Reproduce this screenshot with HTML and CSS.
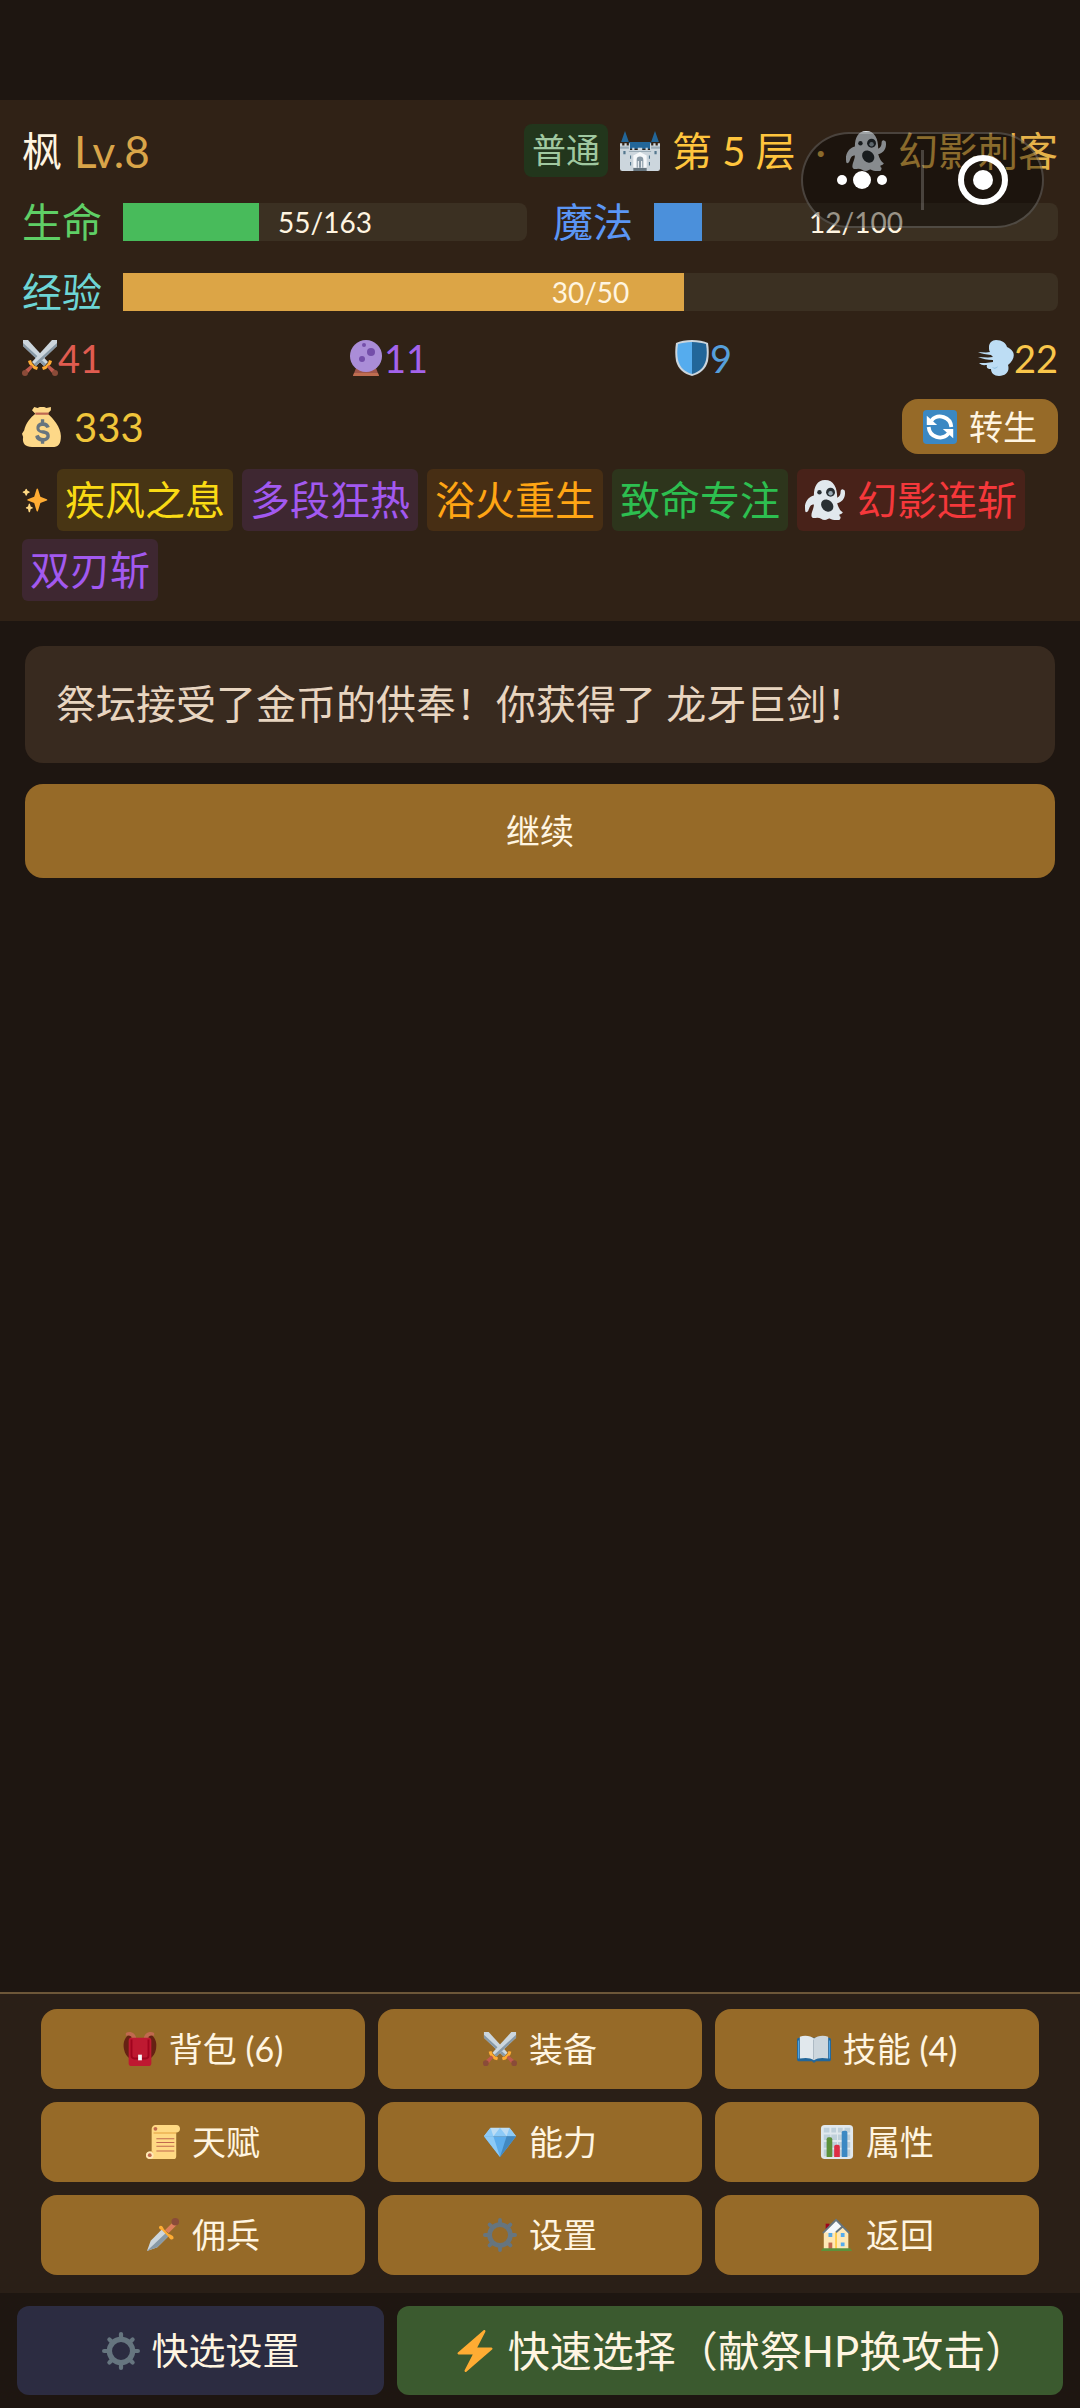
FILE: index.html
```html
<!DOCTYPE html>
<html lang="zh-CN">
<head>
  <meta charset="UTF-8" />
  <meta name="viewport" content="width=device-width, initial-scale=1.0" />
  <title>地牢冒险</title>
  <link rel="stylesheet" href="styles.css">
</head>
<body>
  <!-- icons -->
  <svg class="icon-defs" aria-hidden="true">
    <symbol id="i-castle" viewBox="0 0 36 36">
      <path fill="#269" d="M4.500 0L8 10H1zM31.500 0L35 10h-7zM8 10h20v6H8z"/>
      <path fill="#CCD6DD" d="M0 11h2v2h2v-2h2v2h2v-2h1v6h2v-2h2v2h3v-2h4v2h3v-2h2v2h2v-6h1v2h2v-2h2v2h2v-2h2v23a2 2 0 0 1-2 2H2a2 2 0 0 1-2-2z"/>
      <path fill="#99AAB5" d="M0 14h8v2H0zM28 14h8v2h-8zM8 18h20v1H8z"/>
      <path fill="#66757F" d="M12 33h12v3H12z"/>
      <path fill="#F5F8FA" d="M12 22l6-3 6 3v11H12z"/>
      <path fill="#8899A6" d="M15 33v-7a3 3 0 0 1 6 0v7h-1v-6h-1v6h-2v-6h-1v6z"/>
      <path fill="#55788F" d="M3 18h2v3H3zM31 18h2v3h-2zM9 22h1v3H9zM26 22h1v3h-1zM9 28h1v3H9zM26 28h1v3h-1z"/>
    </symbol>
    <symbol id="i-ghost" viewBox="0 0 36 36">
      <path fill="#E1E8ED" d="M35 9c-1-1-3-1-3 2 0 2-1 4-3 5C29 7 26 0 18 0 11 0 8 6 8 14c-4 1-7 4-8 9 0 3 0 6 1 6 2 0 2-2 3-4 1-3 3-3 4-3 0 4-3 8-2 11 1 2 3 1 5 1 3 0 4 2 7 2 2 0 3-2 5-1 3 1 4 1 7 1 2 0 2-2 2-3-1 0-1-1-1-2 1 0 3-1 3-2-2-1-4-4-5-8 4-1 7-4 7-9 0-1 0-3-1-3z"/>
      <ellipse fill="#292F33" cx="13" cy="11" rx="2" ry="2"/>
      <circle fill="#292F33" cx="23" cy="11" r="4"/>
      <circle fill="#99AAB5" cx="23" cy="12" r="2"/>
      <ellipse fill="#292F33" cx="20" cy="23" rx="5" ry="6" transform="rotate(-45 20 23)"/>
    </symbol>
    <symbol id="i-swords" viewBox="0 0 36 36">
      <g id="blade">
        <path fill="#CCD6DD" d="M1 0h5l20 22-4 4L1 6z"/>
        <path fill="#8899A6" d="M1 6V3l23 21-2 2z"/>
        <path fill="#FFAC33" d="M27 20l3 1-1 3-5 5-3 1-1-3 3-1 3-3z"/>
        <path fill="#BE5A4E" d="M27 25l6 5-3 3-5-6z"/>
        <circle fill="#8A4B38" cx="33" cy="33" r="3"/>
      </g>
      <use href="#blade" transform="matrix(-1 0 0 1 36 0)"/>
    </symbol>
    <symbol id="i-orb" viewBox="0 0 36 36">
      <path fill="#A0564A" d="M8 28h20l3 8H5z"/>
      <path fill="#BE6D50" d="M6 33h24l1 3H5z"/>
      <circle fill="#AA8DD8" cx="18" cy="16" r="16"/>
      <circle fill="#744EAA" cx="16" cy="5" r="2"/>
      <circle fill="#744EAA" cx="23" cy="12" r="4"/>
      <circle fill="#744EAA" cx="14" cy="19" r="3"/>
    </symbol>
    <symbol id="i-shield" viewBox="0 0 36 36">
      <path fill="#CCD6DD" d="M18 0C12 0 6 1 2 3c-1 6-1 12 0 18 2 8 8 13 16 15 8-2 14-7 16-15 1-6 1-12 0-18-4-2-10-3-16-3z"/>
      <path fill="#55ACEE" d="M18 2C12 2 8 3 4 4c-1 6-1 11 0 16 2 8 7 12 14 14z"/>
      <path fill="#226699" d="M18 2c6 0 10 1 14 2 1 6 1 11 0 16-2 8-7 12-14 14z"/>
    </symbol>
    <symbol id="i-dash" viewBox="0 0 36 36">
      <path fill="#BDDDF4" d="M18 0c-4 0-7 3-7 7 0 2 0 4 1 5-4 1-8 0-12 0 4 2 8 2 13 3l2 2c-5 1-10 0-15 0 5 2 9 3 15 3v2c-5 1-10 1-14 1 3 3 6 2 8 2-1 3 1 4 4 4 0 4 3 7 8 7 7 0 11-5 9-11 5-4 7-9 5-13-2-3-4-4-6-5-1-4-5-7-11-7z"/>
      <path fill="#8FBFE0" d="M14 27c2 1 4 1 6-1-1 3-4 4-6 1z"/>
    </symbol>
    <symbol id="i-bag" viewBox="0 0 36 36">
      <path fill="#FDD888" d="M11 0l3 1 2-1h4l2 1 4-1v3l-3 3c5 4 12 12 12 20 0 7-2 10-8 10H9c-6 0-9-3-8-9l-1-3 2-3c1-6 6-12 10-15l-3-3z"/>
      <path fill="#BF6952" d="M12 5h12v2H12z"/>
      <path fill="#67757F" d="M17 11h3v3c3 0 4 2 5 4l-3 1c-1-2-2-2-4-2-3 0-3 4 0 4 5 0 7 2 7 5s-2 4-5 5v2h-3v-2c-3-1-5-2-5-5l3-1c1 2 2 3 4 3 4 0 4-4 0-4-4-1-6-2-6-5s2-5 4-5z"/>
    </symbol>
    <symbol id="i-cycle" viewBox="0 0 36 36">
      <rect fill="#3B88C3" width="36" height="36" rx="4"/>
      <path fill="none" stroke="#FFF" stroke-width="4" d="M9 11a12 12 0 0 1 21 7M27 25a12 12 0 0 1-21-7"/>
      <path fill="#FFF" d="M4 6v10h11zM32 30V20H21z"/>
    </symbol>
    <symbol id="i-spark" viewBox="0 0 36 36">
      <path fill="#FFAC33" d="M34.347 16.893l-8.899-3.294-3.323-10.891c-.128-.42-.517-.708-.956-.708-.439 0-.828.288-.956.708l-3.322 10.891-8.900 3.294c-.393.146-.653.519-.653.938 0 .418.260.793.653.938l8.895 3.293 3.324 11.223c.126.424.516.715.959.715.442 0 .833-.291.959-.716l3.324-11.223 8.896-3.293c.391-.144.652-.518.652-.937 0-.418-.261-.792-.653-.938z"/>
      <path fill="#FFD983" d="M14.347 27.894l-2.314-.856-.900-3.300c-.118-.436-.513-.738-.964-.738-.451 0-.846.302-.965.737l-.900 3.300-2.313.856c-.393.146-.653.520-.653.938 0 .418.260.793.653.938l2.301.853.907 3.622c.112.444.511.756.970.756.459 0 .858-.312.970-.757l.907-3.622 2.301-.853c.393-.144.653-.519.653-.937 0-.418-.260-.793-.653-.937zM10.009 6.231l-2.364-.875-.876-2.365c-.145-.393-.519-.653-.938-.653-.418 0-.792.260-.938.653l-.875 2.365-2.365.875c-.393.146-.653.520-.653.938 0 .418.260.793.653.938l2.365.875.875 2.365c.146.393.520.653.938.653.418 0 .792-.260.938-.653l.875-2.365 2.365-.875c.393-.146.653-.520.653-.938 0-.418-.260-.792-.654-.938z"/>
    </symbol>
    <symbol id="i-pack" viewBox="0 0 36 36">
      <path fill="#662113" d="M6 3C1 7 0 12 1 18c1 5 3 8 6 10V8l4-5zM30 3c5 4 6 9 5 15-1 5-3 8-6 10V8l-4-5z"/>
      <path fill="#C1694F" d="M3 1c4-2 9-1 11 5l-3 2C9 4 7 3 3 4zM33 1c-4-2-9-1-11 5l3 2c2-4 4-5 8-4z"/>
      <path fill="#BE1931" d="M9 6h18c3 0 3 2 3 4v23c0 2-1 3-4 3H10c-3 0-4-1-4-3V10c0-2 0-4 3-4z"/>
      <path fill="none" stroke="#A0041E" stroke-width="2" d="M9 8v17c0 2 1 3 3 3h12c2 0 3-1 3-3V8"/>
      <path fill="#F5F8FA" d="M16 24h4v6h-4z"/>
    </symbol>
    <symbol id="i-book" viewBox="0 0 36 36">
      <path fill="#226699" d="M2 6h32c1 0 2 1 2 2v21c0 1-1 2-2 2H20c-1 2-3 2-4 0H2c-1 0-2-1-2-2V8c0-1 1-2 2-2z"/>
      <path fill="#55ACEE" d="M1 9h1v19H1zM34 9h1v19h-1z"/>
      <path fill="#CCD6DD" d="M18 7c3-3 10-4 15-2v23c-6-1-11-1-15 2z"/>
      <path fill="#E1E8ED" d="M18 7C15 4 8 3 3 5v23c6-1 11-1 15 2z"/>
      <path fill="#AAB8C2" d="M17 8h1v21h-1z"/>
    </symbol>
    <symbol id="i-scroll" viewBox="0 0 36 36">
      <path fill="#FFD983" d="M10 0h22c3 0 4 2 4 4s-1 4-4 4v25c0 2-1 3-3 3H4c-2 0-4-2-4-4s2-4 4-4h2V4c0-2 2-4 4-4z"/>
      <path fill="#E39F3D" d="M8 8h24v1H8zM6 28h1v5H6z"/>
      <circle fill="#FFE8B6" cx="4" cy="32" r="4"/>
      <circle fill="#C1694F" cx="10" cy="4" r="2"/>
      <circle fill="#C1694F" cx="4" cy="32" r="2"/>
      <path fill="#C1694F" d="M11 14h19v1H11zM11 18h19v1H11zM11 22h19v1H11zM11 27h19v1H11z"/>
    </symbol>
    <symbol id="i-gem" viewBox="0 0 36 36">
      <path fill="#BDDDF4" d="M8 3h20l7 9H1z"/>
      <path fill="#8CCAF7" d="M8 3l3 9H1zM28 3l-3 9h10zM11 12l7-9 7 9z"/>
      <path fill="#5DADEC" d="M1 12h34L18 34z"/>
      <path fill="#4289C1" d="M35 12H25l-7 22z"/>
      <path fill="#8CCAF7" d="M1 12h10l7 22z"/>
    </symbol>
    <symbol id="i-chart" viewBox="0 0 36 36">
      <rect fill="#E1E8ED" x="1" width="34" height="36" rx="4"/>
      <path fill="#BFD0DA" d="M4 3h6v5H4zM12 3h5v5h-5zM19 3h5v5h-5zM26 3h6v5h-6zM4 10h28v6H4zM4 18h28v6H4zM4 26h28v7H4z"/>
      <path fill="#E1E8ED" d="M11 9h1v25h-1zM18 9h1v25h-1zM25 9h1v25h-1z"/>
      <path fill="#5C913B" d="M7 15a2 2 0 0 1 2-2h2a2 2 0 0 1 2 2v19H7z"/>
      <path fill="#DD2E44" d="M15 23a2 2 0 0 1 2-2h2a2 2 0 0 1 2 2v11h-6z"/>
      <path fill="#3B88C3" d="M23 8a2 2 0 0 1 2-2h2a2 2 0 0 1 2 2v26h-6z"/>
    </symbol>
    <symbol id="i-dagger" viewBox="0 0 36 36">
      <path fill="#CCD6DD" d="M1 35l4-11 12-12 7 7-12 12z"/>
      <path fill="#8899A6" d="M1 35l20-19 3 3-12 12z"/>
      <path fill="#DD7F5B" d="M20 13l9-9 4 3-9 9z"/>
      <path fill="#FFAC33" d="M14 9c2-2 4 0 5 3l5 5c3 1 6 2 5 5-2 2-4 0-5-2l-7-7c-2-1-4-2-3-4z"/>
      <circle fill="#8A4B38" cx="31" cy="4" r="4"/>
    </symbol>
    <symbol id="i-gear" viewBox="0 0 36 36">
      <circle fill="none" stroke="#66757F" stroke-width="5" cx="18" cy="18" r="11"/>
      <path fill="none" stroke="#66757F" stroke-width="4" stroke-linecap="round" d="M18 2v5M18 29v5M2 18h5M29 18h5M7 7l3 3M26 26l3 3M7 29l3-3M26 10l3-3"/>
    </symbol>
    <symbol id="i-house" viewBox="0 0 36 36">
      <path fill="#A0041E" d="M6 6h4v7H6z"/>
      <path fill="#FFE8B6" d="M4 15L17 2l13 13v18H4z"/>
      <path fill="#FFCC4D" d="M16 15h2v18h-2z"/>
      <path fill="#F5F8FA" d="M5 15L17 3l6 5-8 8z"/>
      <path fill="none" stroke="#66757F" stroke-width="2" d="M3 16L17 2l14 14M17 15l7-6"/>
      <path fill="#55ACEE" d="M9 16h4v4H9zM22 16h4v4h-4zM22 26h4v4h-4z"/>
      <path fill="#C1694F" d="M9 26h4v7H9z"/>
      <path fill="#5C913B" d="M3 32h29l2 3H1z"/>
    </symbol>
    <symbol id="i-bolt" viewBox="0 0 36 36">
      <path fill="#FFAC33" d="M32.938 15.651C32.792 15.260 32.418 15 32 15H19.925L26.890 1.458c.219-.426.106-.947-.271-1.243C26.437.071 26.218 0 26 0c-.233 0-.466.082-.653.243L18 6.588 3.347 19.243c-.316.273-.430.714-.284 1.105S3.582 21 4 21h12.075L9.110 34.542c-.219.426-.106.947.271 1.243.182.144.401.215.619.215.233 0 .466-.082.653-.243L18 29.412l14.653-12.655c.317-.273.430-.714.285-1.106z"/>
    </symbol>
  </svg>

  <div class="mini-menu">
    <button type="button" aria-label="更多">
      <svg viewBox="0 0 60 60"><circle cx="10" cy="30" r="5"/><circle cx="30" cy="30" r="9"/><circle cx="50" cy="30" r="5"/></svg>
    </button>
    <span class="mini-line"></span>
    <button type="button" aria-label="关闭">
      <svg viewBox="0 0 60 60"><circle cx="30" cy="30" r="22" fill="none" stroke="#fff" stroke-width="6"/><circle cx="30" cy="30" r="10"/></svg>
    </button>
  </div>

  <header class="status">
    <div class="row top-row">
      <div class="hero"><span>枫</span><span class="level">Lv.8</span></div>
      <div class="floor">
        <span class="mode">普通</span>
        <svg class="icon"><use href="#i-castle"/></svg>
        <span>第 5 层</span>
        <span class="dot">·</span>
        <svg class="icon"><use href="#i-ghost"/></svg>
        <span class="job">幻影刺客</span>
      </div>
    </div>

    <div class="row bars">
      <div class="meter hp">
        <span class="meter-name">生命</span>
        <div class="track"><div class="fill" style="width:33.74%"></div><span class="value">55/163</span></div>
      </div>
      <div class="meter mp">
        <span class="meter-name">魔法</span>
        <div class="track"><div class="fill" style="width:12%"></div><span class="value">12/100</span></div>
      </div>
    </div>
    <div class="row bars">
      <div class="meter xp">
        <span class="meter-name">经验</span>
        <div class="track"><div class="fill" style="width:60%"></div><span class="value">30/50</span></div>
      </div>
    </div>

    <div class="row stats">
      <span class="stat atk"><svg class="icon"><use href="#i-swords"/></svg>41</span>
      <span class="stat mag"><svg class="icon"><use href="#i-orb"/></svg>11</span>
      <span class="stat def"><svg class="icon"><use href="#i-shield"/></svg>9</span>
      <span class="stat spd"><svg class="icon"><use href="#i-dash"/></svg>22</span>
    </div>

    <div class="row gold-row">
      <span class="gold"><svg class="icon"><use href="#i-bag"/></svg>333</span>
      <button type="button" class="btn rebirth"><svg class="icon"><use href="#i-cycle"/></svg>转生</button>
    </div>

    <div class="traits">
      <svg class="icon spark"><use href="#i-spark"/></svg>
      <span class="chip yellow">疾风之息</span>
      <span class="chip purple">多段狂热</span>
      <span class="chip orange">浴火重生</span>
      <span class="chip green">致命专注</span>
      <span class="chip red"><svg class="icon"><use href="#i-ghost"/></svg>幻影连斩</span>
      <span class="chip purple">双刃斩</span>
    </div>
  </header>

  <main class="scene">
    <p class="message">祭坛接受了金币的供奉！你获得了 龙牙巨剑！</p>
    <button type="button" class="btn next">继续</button>
  </main>

  <nav class="menu">
    <button type="button" class="btn"><svg class="icon"><use href="#i-pack"/></svg>背包 (6)</button>
    <button type="button" class="btn"><svg class="icon"><use href="#i-swords"/></svg>装备</button>
    <button type="button" class="btn"><svg class="icon"><use href="#i-book"/></svg>技能 (4)</button>
    <button type="button" class="btn"><svg class="icon"><use href="#i-scroll"/></svg>天赋</button>
    <button type="button" class="btn"><svg class="icon"><use href="#i-gem"/></svg>能力</button>
    <button type="button" class="btn"><svg class="icon"><use href="#i-chart"/></svg>属性</button>
    <button type="button" class="btn"><svg class="icon"><use href="#i-dagger"/></svg>佣兵</button>
    <button type="button" class="btn"><svg class="icon"><use href="#i-gear"/></svg>设置</button>
    <button type="button" class="btn"><svg class="icon"><use href="#i-house"/></svg>返回</button>
  </nav>

  <footer class="quick">
    <button type="button" class="btn quick-set"><svg class="icon"><use href="#i-gear"/></svg>快选设置</button>
    <button type="button" class="btn quick-pick"><svg class="icon"><use href="#i-bolt"/></svg><span>快速选择（献祭HP换攻击<span class="half">）</span></span></button>
  </footer>
</body>
</html>
```
FILE: styles.css
```css
* {
  margin: 0;
  padding: 0;
  box-sizing: border-box;
}

body {
  min-height: 100vh;
  display: flex;
  flex-direction: column;
  padding-top: 100px;
  background: #1e1611;
  color: #fff5e1;
  font-family: Lato, "Noto Sans CJK SC", sans-serif;
  font-size: 40px;
  line-height: 1;
}

.icon-defs {
  position: absolute;
  width: 0;
  height: 0;
}

.icon {
  width: 36px;
  height: 36px;
  flex: none;
}

.btn {
  display: flex;
  align-items: center;
  justify-content: center;
  gap: 12px;
  border: none;
  border-radius: 16px;
  background: #966a28;
  color: #fff5e1;
  font-family: inherit;
  font-size: 34px;
  line-height: 1;
  cursor: pointer;
}

.btn .icon {
  width: 34px;
  height: 34px;
}

/* floating capsule */
.mini-menu {
  position: absolute;
  top: 132px;
  right: 36px;
  width: 243px;
  height: 96px;
  display: flex;
  align-items: center;
  border: 2px solid rgba(255, 255, 255, 0.2);
  border-radius: 48px;
  background: rgba(0, 0, 0, 0.4);
  z-index: 2;
}

.mini-menu button {
  flex: 1;
  height: 60px;
  border: none;
  background: none;
}

.mini-menu svg {
  width: 60px;
  height: 60px;
  fill: #fff;
}

.mini-line {
  width: 3px;
  height: 60px;
  background: rgba(255, 255, 255, 0.2);
}

/* header */
.status {
  padding: 24px 22px 20px;
  background: #302216;
}

.row {
  display: flex;
  align-items: center;
  justify-content: space-between;
}

.top-row {
  height: 53px;
}

.hero,
.floor {
  display: flex;
  align-items: center;
  gap: 12px;
}

.level {
  font-size: 44px;
  color: #d9a549;
}

.floor {
  color: #ffc53d;
}

.floor .icon {
  width: 40px;
  height: 40px;
}

.mode {
  padding: 9px 8px 10px;
  border-radius: 8px;
  background: #22361c;
  color: #a0c8a0;
  font-size: 34px;
}

.job,
.dot {
  color: #e6b34a;
}

.dot {
  padding: 0 8px;
}

.bars {
  height: 50px;
  margin-top: 20px;
  gap: 26px;
}

.meter {
  flex: 1;
  display: flex;
  align-items: center;
  gap: 21px;
}

.track {
  position: relative;
  flex: 1;
  height: 38px;
  border-radius: 8px;
  background: #3b3022;
}

.fill {
  height: 100%;
}

.value {
  position: absolute;
  inset: 0;
  display: flex;
  align-items: center;
  justify-content: center;
  font-size: 28px;
}

.hp .meter-name { color: #5fcf66; }
.mp .meter-name { color: #5b96f5; }
.xp .meter-name { color: #6dd5d5; }
.hp .fill { background: #48bb5b; }
.mp .fill { background: #4b90db; }
.xp .fill { background: #dca546; }

.stats {
  height: 40px;
  margin-top: 21px;
  font-size: 38px;
}

.stat {
  display: flex;
  align-items: center;
}

.atk { color: #e05c50; }
.mag { color: #a463ea; }
.def { color: #569fdb; }
.spd { color: #f9c64a; }

.gold-row {
  height: 55px;
  margin-top: 21px;
}

.gold {
  display: flex;
  align-items: center;
  gap: 12px;
  color: #f0c53a;
}

.gold .icon,
.chip .icon {
  width: 40px;
  height: 40px;
}

.rebirth {
  height: 55px;
  padding: 0 21px;
}

.traits {
  display: flex;
  flex-wrap: wrap;
  align-items: center;
  gap: 8px 9px;
  margin-top: 15px;
}

.traits .spark {
  width: 26px;
  height: 26px;
}

.chip {
  display: flex;
  align-items: center;
  gap: 12px;
  height: 62px;
  padding: 0 8px;
  border-radius: 6px;
}

.yellow { color: #fadb14; background: #483514; }
.purple { color: #a259f0; background: #3e2731; }
.orange { color: #ffa514; background: #472e14; }
.green { color: #2dbf50; background: #2d351c; }
.red { color: #f5383b; background: #482219; }

/* event */
.scene {
  flex: 1;
  padding: 25px;
}

.message {
  padding: 38px 31px 39px;
  border-radius: 18px;
  background: #382a1f;
  color: #e8d5c0;
}

.next {
  width: 100%;
  height: 94px;
  margin-top: 21px;
  border-radius: 18px;
}

/* bottom */
.menu {
  display: grid;
  grid-template-columns: repeat(3, 1fr);
  grid-auto-rows: 80px;
  gap: 13px;
  padding: 15px 41px 18px;
  border-top: 2px solid #6d5739;
  background: #2a1f17;
}

.quick {
  display: grid;
  grid-template-columns: 367fr 666fr;
  gap: 13px;
  padding: 13px 17px;
}

.quick .btn {
  height: 89px;
  border-radius: 12px;
}

.quick .quick-set {
  background: #2c2c41;
  font-size: 37px;
}

.quick .quick-pick {
  background: #3b5a2f;
  font-size: 42px;
}

.half {
  font-feature-settings: "halt";
}

.quick-set .icon {
  width: 38px;
  height: 38px;
}

.quick-pick .icon {
  width: 42px;
  height: 42px;
}
```
